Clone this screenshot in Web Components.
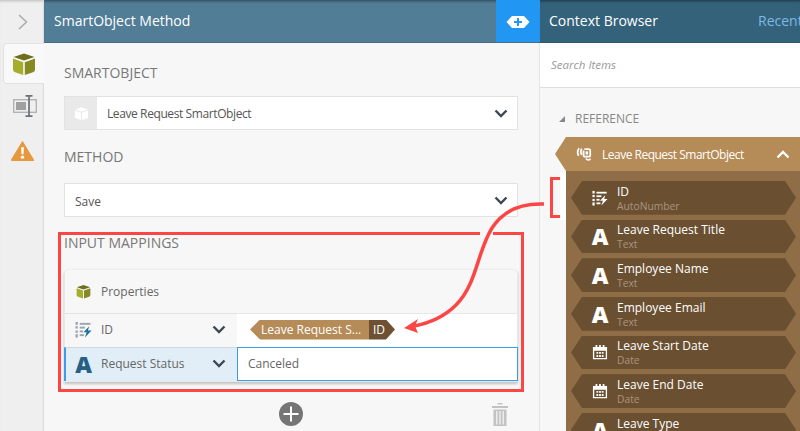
<!DOCTYPE html>
<html>
<head>
<meta charset="utf-8">
<title>SmartObject Method</title>
<style>
html, body { margin: 0; padding: 0; height: 431px; overflow: hidden; background: #f7f7f7; }
body { font-family: "Open Sans", "Liberation Sans", sans-serif; color: #555; }
</style>
</head>
<body>
<app-shell>
  <side-rail slot="rail"></side-rail>
  <method-panel slot="main"></method-panel>
  <context-browser slot="side"></context-browser>
</app-shell>
<note-overlay></note-overlay>

<script>
const ICONS = {
  cube: `<svg viewBox="0 0 24 24" width="100%" height="100%"><path fill="#6d6f1f" d="M12 1.500 22.500 5 12 8.600 1.500 5z"/><path fill="#a7ac2c" d="M1 6.600 11.200 10.200V23L3 20.200Q1 19.500 1 17.500z"/><path fill="#878a20" d="M23 6.600 12.800 10.200V23L21 20.200Q23 19.500 23 17.500z"/></svg>`,
  whiteCube: `<svg viewBox="0 0 24 24" width="100%" height="100%"><path fill="#fff" d="M12 2 22 5.500 12 9 2 5.500z"/><path fill="#fff" d="M1.500 7 11.200 10.400V22.500L1.500 19z"/><path fill="#fff" d="M22.500 7 12.800 10.400V22.500L22.500 19z"/></svg>`,
  resize: `<svg viewBox="0 0 24 22" width="24" height="22"><rect x=".7" y="4.700" width="22.600" height="12.600" fill="none" stroke="#b0b0b0" stroke-width="1.300"/><rect x="3" y="7" width="10" height="8" fill="#a0a0a0"/><path d="M16 0V22M12.500 .8H19.500M12.500 21.200H19.500" fill="none" stroke="#6b7278" stroke-width="1.700"/></svg>`,
  warning: `<svg viewBox="0 0 24 22" width="100%" height="100%"><path fill="#e5983d" stroke="#e5983d" stroke-width="2" stroke-linejoin="round" d="M12 2 23 20.500H1z"/><path fill="#fff" d="M10.500 7H13.500L13 14.500H11z"/><circle cx="12" cy="17.500" r="1.700" fill="#fff"/></svg>`,
  chevronDown: `<svg viewBox="0 0 14 9" width="14" height="9"><path d="M1.500 1.500 7 7 12.500 1.500" fill="none" stroke="#3d4856" stroke-width="2.400"/></svg>`,
  autoNumber: c => `<svg viewBox="0 0 18 18" width="100%" height="100%"><g fill="${c}"><rect x=".5" y="1" width="2.500" height="3"/><rect x=".5" y="5.500" width="2.500" height="2.500"/><rect x=".5" y="10" width="2.500" height="2.500"/><rect x=".5" y="14" width="2.500" height="3.500"/><rect x="5" y="2" width="11.500" height="2"/><rect x="5" y="6" width="5.500" height="2"/><rect x="5" y="10" width="3.500" height="2"/><rect x="5" y="14" width="4.500" height="2"/></g><path fill="${c === '#fff' ? '#fff' : '#1f6f9c'}" d="M15 5.500 9 12H12.300L10.500 17.500 17.500 10H13.700z"/></svg>`,
  calendar: `<svg viewBox="0 0 18 18" width="100%" height="100%"><path fill="none" stroke="#fff" stroke-width="1.500" d="M1.800 4H16.200V16.500H1.800z"/><path fill="#fff" d="M1.500 3.500H16.500V7.500H1.500zM4 1H6V4H4zM8 1H10V4H8zM12 1H14V4H12zM5 9H7V11H5zM8 9H10V11H8zM11 9H13V11H11zM5 12.500H7V14.500H5zM8 12.500H10V14.500H8zM11 12.500H13V14.500H11z"/></svg>`,
  linked: `<svg viewBox="0 0 18 18" width="100%" height="100%"><g fill="none" stroke="#fff"><path stroke-width="2" d="M3.500 2.500Q.5 6.500 3 11M6.500 3Q4.500 6.500 6.500 10"/><path stroke-width="2" d="M9.500 3.500H14Q16 3.500 16 5.500V10Q16 12 14 12H10.500Q8.500 12 8.500 10V5"/><path stroke-width="1.600" d="M11 14Q13.500 17 16.500 14.500"/></g><rect x="10.800" y="6" width="2.800" height="3.600" fill="#fff"/></svg>`
};

function makeEl(name, markup) {
  customElements.define(name, class extends HTMLElement {
    constructor() {
      super();
      this.attachShadow({ mode: 'open' }).innerHTML = `<style>svg { display: block; }</style>` + markup;
    }
  });
}

makeEl('app-shell', `
<style>
:host { display: grid; grid-template-columns: 44px 496px 260px; width: 800px; height: 431px; overflow: hidden; }
</style>
<slot name="rail"></slot><slot name="main"></slot><slot name="side"></slot>`);

makeEl('side-rail', `
<style>
:host { display: flex; flex-direction: column; background: #efefef; border-right: 1px solid #dcdcdc; box-sizing: border-box; height: 431px; box-shadow: inset 0 3px 3px -2px #bbb; }
.top { height: 43px; display: flex; align-items: center; justify-content: center; padding-left: 2px; }
.tab { height: 44px; display: flex; align-items: center; justify-content: center; padding-left: 7px; }
.tab.on { margin-left: 3px; margin-right: -1px; padding-left: 0; background: #f9f9f9; border: 1px solid #e2e2e2; border-right: 0; border-radius: 4px 0 0 4px; box-sizing: border-box; height: 41px; }
.tab.w { height: 46px; padding-left: 2px; box-sizing: border-box; }
.cube { width: 24px; height: 24px; }
.warn { width: 23px; height: 22px; }
</style>
<div class="top"><svg width="10" height="16" viewBox="0 0 10 16"><path d="M1 1 8.500 8 1 15" fill="none" stroke="#aaa" stroke-width="1.500"/></svg></div>
<div class="tab on"><div class="cube">${ICONS.cube}</div></div>
<div class="tab">${ICONS.resize}</div>
<div class="tab w"><div class="warn">${ICONS.warning}</div></div>`);

makeEl('panel-header', `
<style>
:host { display: flex; align-items: center; height: 43px; box-sizing: border-box; background: var(--head, #517d97); color: #fff; font-size: 14px; padding-left: var(--pad, 10px); border-bottom: 1px solid rgba(0,0,0,.12); box-shadow: inset 0 3px 3px -2px rgba(0,0,0,.45); flex: none; overflow: hidden; }
.t { flex: 1; white-space: nowrap; padding-bottom: 2px; }
</style>
<span class="t"><slot></slot></span><slot name="end"></slot>`);

makeEl('field-select', `
<style>
:host { display: flex; align-items: center; height: 34px; box-sizing: border-box; background: #fff; border: 1px solid #e2e2e2; font-size: 12px; color: #555; }
.pic { width: 32px; align-self: stretch; background: #e9e9e9; display: flex; align-items: center; justify-content: center; }
.pic div { width: 15px; height: 15px; }
:host([plain]) .pic { display: none; }
:host([plain]) .v { padding-top: 2px; }
.v { flex: 1; padding-left: 10px; }
.c { padding-right: 9px; display: flex; }
</style>
<div class="pic"><div>${ICONS.whiteCube}</div></div>
<div class="v"><slot></slot></div>
<div class="c">${ICONS.chevronDown}</div>`);

makeEl('mapping-row', `
<style>
:host { display: grid; grid-template-columns: 172px 1fr; height: 34px; font-size: 12px; color: #666; }
.l { display: flex; align-items: center; background: #f7f7f7; border-top: 1px solid #e2e2e2; box-sizing: border-box; padding-bottom: 2px; }
.ic { width: 36px; display: flex; justify-content: center; align-items: center; font-weight: 800; color: #285f85; }
.n { flex: 1; }
.c { display: flex; padding-right: 11px; }
.r { display: flex; align-items: center; background: #fff; border-top: 1px solid #e8e8e8; padding-left: 13px; padding-bottom: 2px; box-sizing: border-box; }
:host([active]) { grid-template-columns: 173px 1fr; margin: 0 -1px; }
:host([active]) .l { background: #e1eef8; border-left: 2px solid #3d9be9; border-top-color: #cfd8df; }
:host([active]) .ic { width: 35px; }
:host([active]) .r { border: 1px solid #3d9be9; padding-left: 10px; }
</style>
<div class="l"><div class="ic"><slot name="icon"></slot></div><div class="n"><slot name="name"></slot></div><div class="c">${ICONS.chevronDown}</div></div>
<div class="r"><slot></slot></div>`);

makeEl('ref-chip', `
<style>
:host { display: inline-flex; height: 20px; font-size: 12px; font-weight: 500; color: #fff; line-height: 20px; }
.a { background: #b58b57; padding: 0 9px 0 11px; clip-path: polygon(10px 0, 100% 0, 100% 100%, 10px 100%, 0 50%); width: 99px; white-space: nowrap; }
.b { background: #6e5133; padding: 0 13px 0 4px; width: 9px; font-weight: 400; clip-path: polygon(0 0, 17px 0, 100% 50%, 17px 100%, 0 100%); }
</style>
<div class="a"><slot></slot></div><div class="b"><slot name="field"></slot></div>`);

makeEl('mapping-card', `
<style>
:host { display: block; background: #f7f7f7; border: 1px solid #e8e8e8; border-top-color: #eee; border-radius: 5px 5px 0 0; box-shadow: 0 2px 3px rgba(0,0,0,.22); }
.h { height: 43px; display: flex; align-items: center; gap: 10px; padding-left: 11px; font-size: 12px; color: #666; }
.h div { width: 15px; height: 15px; }
</style>
<div class="h"><div>${ICONS.cube}</div><slot name="title"></slot></div>
<slot></slot>`);

makeEl('method-panel', `
<style>
:host { display: flex; flex-direction: column; height: 431px; background: #f7f7f7; box-sizing: border-box; }
panel-header { --pad: 10px; }
.add { width: 44px; align-self: stretch; background: #2196f3; display: flex; align-items: center; justify-content: center; margin-bottom: -1px; }
.body { padding: 0 21px 0 20px; flex: 1; display: flex; flex-direction: column; border-right: 1px solid #e4e4e4; }
h3 { margin: 0; font-weight: 400; font-size: 14px; line-height: 20px; color: #777; text-transform: uppercase; }
.a { margin-top: 20px; margin-bottom: 13px; }
.b { margin-top: 17px; margin-bottom: 16px; }
.c { margin-top: 16px; margin-bottom: 16px; }
.tools { display: flex; align-items: center; margin-top: 20px; }
.plus { margin-left: 215px; width: 24px; height: 24px; }
.bin { margin-left: 189px; width: 16px; height: 23px; }
.tight { letter-spacing: -.4px; }
</style>
<panel-header>SmartObject Method
  <div class="add" slot="end"><svg width="24" height="14" viewBox="0 0 24 14"><path fill="#fff" d="M6 1H18L23.500 7 18 13H6L.5 7z"/><path d="M12 3V11M8 7H16" stroke="#2196f3" stroke-width="2"/></svg></div>
</panel-header>
<div class="body">
  <h3 class="a">SmartObject</h3>
  <field-select><span class="tight">Leave Request SmartObject</span></field-select>
  <h3 class="b">Method</h3>
  <field-select plain>Save</field-select>
  <h3 class="c">Input Mappings</h3>
  <mapping-card>
    <span slot="title">Properties</span>
    <mapping-row>
      <div slot="icon" style="width:17px;height:17px">${ICONS.autoNumber('#9aa5ad')}</div>
      <span slot="name">ID</span>
      <ref-chip>Leave Request S...<span slot="field">ID</span></ref-chip>
    </mapping-row>
    <mapping-row active>
      <span slot="icon" style="font-size:23px;line-height:20px">A</span>
      <span slot="name">Request Status</span>
      Canceled
    </mapping-row>
  </mapping-card>
  <div class="tools">
    <svg class="plus" viewBox="0 0 24 24"><circle cx="12" cy="12" r="12" fill="#757575"/><path d="M12 4.500V19.500M4.500 12H19.500" stroke="#fff" stroke-width="2"/></svg>
    <svg class="bin" viewBox="0 0 16 23"><path fill="#c2c2c2" d="M5.500 0H10.500V1.500H5.500zM0 3H16V5H0zM1.500 6.500H14.500V23H1.500z"/><path d="M4.800 8V21.500M8 8V21.500M11.200 8V21.500" stroke="#f7f7f7" stroke-width="1.200"/></svg>
  </div>
</div>`);

makeEl('tree-item', `
<style>
:host { display: flex; align-items: center; height: 33.670px; background: #6b4f31; clip-path: polygon(11px 0, calc(100% - 11px) 0, 100% 50%, calc(100% - 11px) 100%, 11px 100%, 0 50%); color: #fff; box-sizing: border-box; flex: none; }
.ic { width: 46px; display: flex; align-items: center; justify-content: center; padding-left: 12px; box-sizing: border-box; font-weight: 800; font-size: 23px; }
.ic ::slotted(div) { width: 16px; height: 16px; }
.tx { display: flex; flex-direction: column; padding-top: 1px; }
.n { font-size: 12px; line-height: 15px; font-weight: 500; }
.k { font-size: 10.300px; line-height: 14px; color: #a89680; }
</style>
<div class="ic"><slot name="icon"></slot></div>
<div class="tx"><span class="n"><slot></slot></span><span class="k"><slot name="kind"></slot></span></div>`);

makeEl('context-browser', `
<style>
:host { display: flex; flex-direction: column; height: 431px; background: #f7f7f7; overflow: hidden; }
panel-header { --head: #35627b; --pad: 9px; }
.rec { color: #7cb8e4; font-size: 14px; width: 42px; overflow: hidden; padding-bottom: 2px; }
.search { height: 45px; box-sizing: border-box; background: #fff; border-bottom: 1px solid #ddd; display: flex; align-items: center; padding: 0 0 2px 11px; font-size: 11.500px; font-style: italic; color: #999; flex: none; }
.ref { display: flex; align-items: center; gap: 10px; margin: 22px 0 9px 19px; font-size: 12px; line-height: 18px; color: #888; flex: none; }
.ref i { width: 0; height: 0; border-style: solid; border-width: 0 0 6px 6px; border-color: transparent transparent #888 transparent; }
.group { margin-left: 15px; height: 34px; background: #b58b57; color: #fff; display: flex; align-items: center; font-size: 12px; font-weight: 500; letter-spacing: -.5px; flex: none; clip-path: polygon(11px 0, 100% 0, 100% 100%, 11px 100%, 0 50%); padding-left: 21px; gap: 10px; }
.group .pic { width: 16px; height: 16px; }
.group span { flex: 1; white-space: nowrap; }
.group svg.up { margin-right: 10px; }
.list { margin-left: 26px; background: #8e6d47; padding: 10px 4px 0 5px; display: flex; flex-direction: column; gap: 5px; flex: 1; overflow: hidden; }
</style>
<panel-header>Context Browser<div class="rec" slot="end">Recent</div></panel-header>
<div class="search">Search Items</div>
<div class="ref"><i></i>REFERENCE</div>
<div class="group"><div class="pic">${ICONS.linked}</div><span>Leave Request SmartObject</span><svg class="up" width="14" height="9" viewBox="0 0 14 9"><path d="M1.500 7.500 7 2 12.500 7.500" fill="none" stroke="#fff" stroke-width="2.400"/></svg></div>
<div class="list">
  <tree-item><div slot="icon">${ICONS.autoNumber('#fff')}</div>ID<span slot="kind">AutoNumber</span></tree-item>
  <tree-item><span slot="icon">A</span>Leave Request Title<span slot="kind">Text</span></tree-item>
  <tree-item><span slot="icon">A</span>Employee Name<span slot="kind">Text</span></tree-item>
  <tree-item><span slot="icon">A</span>Employee Email<span slot="kind">Text</span></tree-item>
  <tree-item><div slot="icon">${ICONS.calendar}</div>Leave Start Date<span slot="kind">Date</span></tree-item>
  <tree-item><div slot="icon">${ICONS.calendar}</div>Leave End Date<span slot="kind">Date</span></tree-item>
  <tree-item><span slot="icon">A</span>Leave Type<span slot="kind">Text</span></tree-item>
</div>`);

// red callouts sit on top of everything, so they are placed on the page
makeEl('note-overlay', `
<style>
:host { position: absolute; left: 0; top: 0; width: 800px; height: 431px; pointer-events: none; display: block; }
</style>
<svg width="800" height="431" viewBox="0 0 800 431">
  <rect x="59.500" y="233.500" width="463" height="157" fill="none" stroke="#fb4646" stroke-width="3"/>
  <rect x="480" y="230" width="13" height="7" fill="#f7f7f7"/>
  <rect x="560" y="172" width="6" height="48" fill="#fff"/>
  <path d="M560 178.500H551.500V216.500H560" fill="none" stroke="#fb4646" stroke-width="3"/>
  <path d="M544 204C520 203 503 211 492 228C477 252 477 284 456 305C445 316 430 323 414 326" fill="none" stroke="#fb4646" stroke-width="3.500"/>
  <path d="M404 328 418 319 415 326 418 333z" fill="#fb4646"/>
</svg>`);
</script>
</body>
</html>
